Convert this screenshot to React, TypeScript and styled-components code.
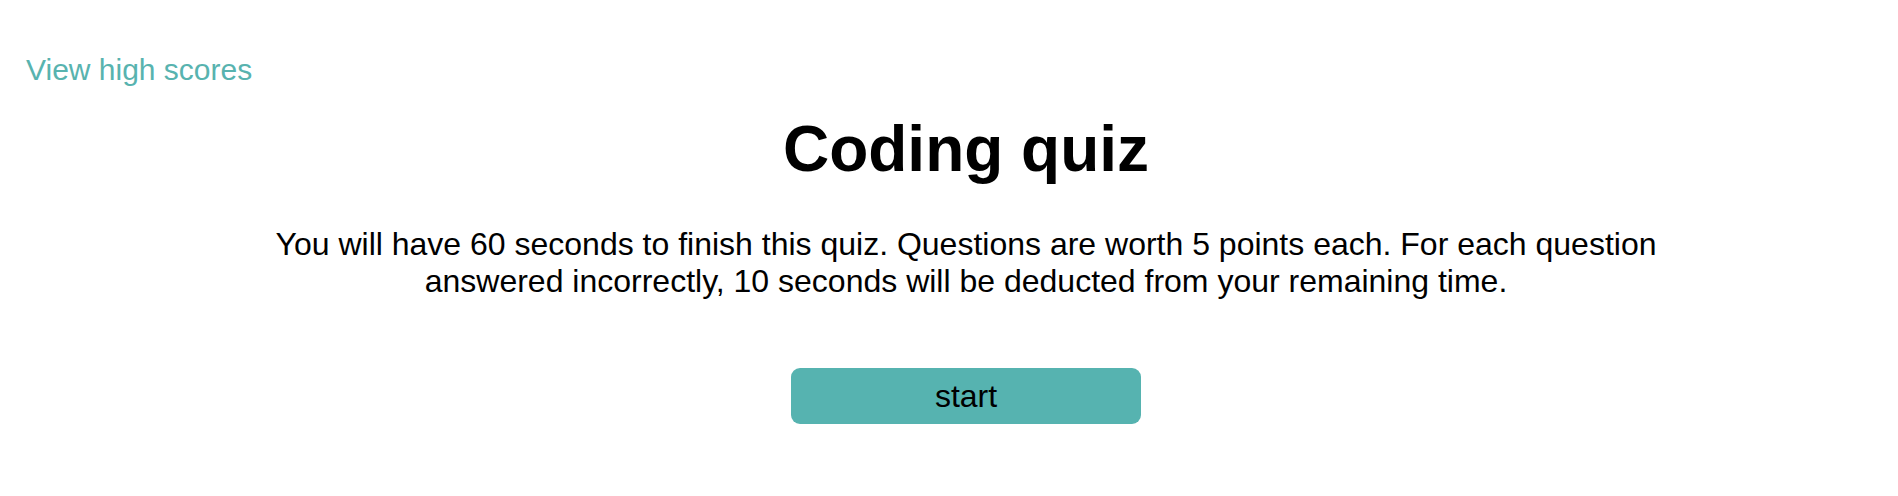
import React from 'react';
import styled, { createGlobalStyle } from 'styled-components';

const GlobalStyle = createGlobalStyle`
  body {
    margin: 0;
    background: #ffffff;
    font-family: "Liberation Sans", Arial, sans-serif;
    color: #000000;
  }
`;

const Header = styled.header`
  padding: 53px 0 0 26px;
`;

const HighScoresLink = styled.a`
  display: inline-block;
  font-size: 30px;
  color: #58b3af;
  text-decoration: none;
  cursor: pointer;
`;

const Main = styled.main`
  display: flex;
  flex-direction: column;
  align-items: center;
  padding-left: 34px;
`;

const Title = styled.h1`
  margin: 25px 0 0;
  font-size: 64px;
  font-weight: bold;
  line-height: normal;
`;

const Intro = styled.p`
  margin: 40px 0 0;
  max-width: 1420px;
  font-size: 32px;
  line-height: normal;
  text-align: center;
`;

const StartButton = styled.button`
  margin-top: 68px;
  width: 350px;
  height: 56px;
  border: none;
  border-radius: 9px;
  background: #56b3b0;
  color: #000000;
  font-family: "Liberation Sans", Arial, sans-serif;
  font-size: 32px;
  cursor: pointer;
`;

const App = () => {
  return (
    <>
      <GlobalStyle />
      <Header>
        <HighScoresLink>View high scores</HighScoresLink>
      </Header>
      <Main>
        <Title>Coding quiz</Title>
        <Intro>
          You will have 60 seconds to finish this quiz. Questions are worth 5 points each. For each question
          answered incorrectly, 10 seconds will be deducted from your remaining time.
        </Intro>
        <StartButton>start</StartButton>
      </Main>
    </>
  );
};

export default App;
